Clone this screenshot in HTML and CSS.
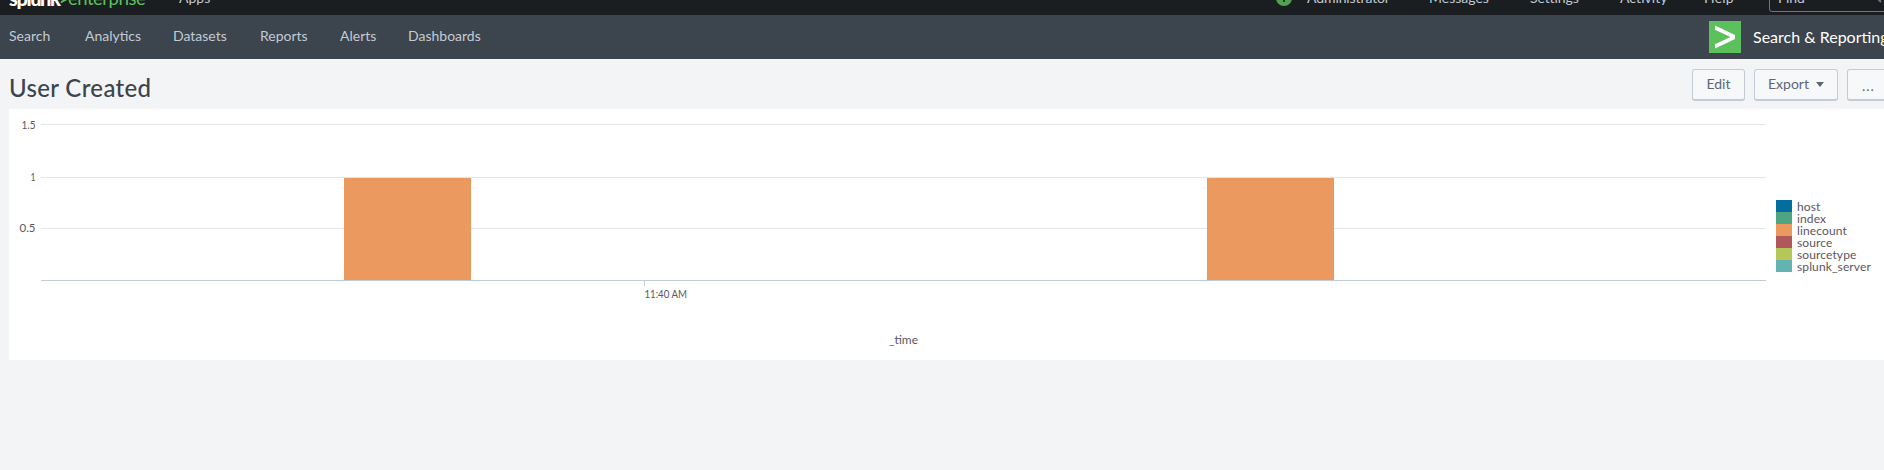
FILE: index.html
```html
<!DOCTYPE html>
<html lang="en">
<head>
<meta charset="utf-8">
<title>User Created</title>
<link rel="stylesheet" href="styles.css">
</head>
<body>
<header class="topbar">
  <div class="brand"><span class="brand-name">splunk</span><span class="brand-caret">&gt;</span><span class="brand-edition">enterprise</span></div>
  <a class="apps">Apps</a>
  <nav class="system">
    <span class="health">i</span>
    <a class="admin">Administrator</a>
    <a class="messages">Messages</a>
    <a class="settings">Settings</a>
    <a class="activity">Activity</a>
    <a class="help">Help</a>
    <div class="find"><span>Find</span>
      <svg class="find-icon" width="12" height="12" viewBox="0 0 12 12"><circle cx="4.500" cy="4.500" r="3.500"/><path d="M7 7l4 4"/></svg>
    </div>
  </nav>
</header>
<nav class="appbar">
  <div class="links">
    <a>Search</a>
    <a>Analytics</a>
    <a>Datasets</a>
    <a>Reports</a>
    <a>Alerts</a>
    <a>Dashboards</a>
  </div>
  <div class="app">
    <svg class="app-icon" width="32" height="32" viewBox="0 0 32 32"><rect width="32" height="32" fill="#5cc05c"/><path d="M6 4.500L26 14v4L6 27.500v-4.300L21.500 16 6 8.800z" fill="#fff"/></svg>
    <span class="app-name">Search &amp; Reporting</span>
  </div>
</nav>
<main>
  <div class="heading">
    <h1>User Created</h1>
    <div class="actions">
      <button class="edit">Edit</button>
      <button class="export">Export<i class="caret"></i></button>
      <button class="more">...</button>
    </div>
  </div>
  <section class="panel">
    <svg class="chart" width="1767" height="251" viewBox="0 0 1767 251">
      <g class="grid"><path d="M32 15.500H1757M32 68.500H1757M32 119.500H1757"/></g>
      <g class="bars"><rect x="335" y="69" width="127" height="102"/><rect x="1198" y="69" width="127" height="102"/></g>
      <path class="axis" d="M32 171.500H1757M635.500 172v5"/>
      <g class="labels">
        <text x="12.500" y="20" textLength="14" lengthAdjust="spacingAndGlyphs">1.5</text>
        <text x="21.500" y="72" textLength="5" lengthAdjust="spacingAndGlyphs">1</text>
        <text x="10.500" y="123" textLength="16" lengthAdjust="spacingAndGlyphs">0.5</text>
        <text x="635.500" y="189" textLength="42.500" lengthAdjust="spacingAndGlyphs">11:40 AM</text>
        <text x="880" y="235" textLength="29" lengthAdjust="spacingAndGlyphs">_time</text>
      </g>
    </svg>
    <ul class="legend">
      <li><i class="host"></i><span>host</span></li>
      <li><i class="index"></i><span>index</span></li>
      <li><i class="linecount"></i><span>linecount</span></li>
      <li><i class="source"></i><span>source</span></li>
      <li><i class="sourcetype"></i><span>sourcetype</span></li>
      <li><i class="server"></i><span>splunk_server</span></li>
    </ul>
  </section>
</main>
</body>
</html>
```

FILE: styles.css
```css
* { box-sizing: border-box; }
body {
  margin: 0;
  height: 470px;
  overflow: hidden;
  background: #f2f4f5;
  font: 14px/20px Lato, "Open Sans", sans-serif;
  color: #3c444d;
}
.topbar {
  height: 15px;
  background: #1a1e21;
  color: #c3cbd4;
  display: flex;
  align-items: flex-end;
  overflow: hidden;
  padding-left: 9px;
  white-space: nowrap;
}
.topbar a { height: 27px; line-height: 20px; flex: none; }
.brand { width: 170px; height: 29px; font-size: 20px; line-height: 24px; flex: none; display: flex; }
.brand span { flex: none; }
.brand-name { width: 51px; color: #fff; font-weight: 900; letter-spacing: -1.4px; }
.brand-edition { color: #5cc05c; font-size: 18.5px; letter-spacing: -.5px; }
.brand-caret { width: 8px; color: #5cc05c; font-weight: 900; font-size: 17px; line-height: 25px; margin-left: -1px; margin-right: 1px; }
.system { margin-left: auto; width: 608px; display: flex; align-items: flex-end; flex: none; }
.health {
  width: 16px; height: 16px; margin-bottom: 9px; border-radius: 50%; flex: none;
  background: #53a051; color: #1a1e21; font-size: 12px; line-height: 16px; text-align: center; font-weight: bold;
}
.admin { width: 122px; margin-left: 15px; }
.messages { width: 101px; }
.settings { width: 90px; }
.activity { width: 84px; }
.help { width: 65px; letter-spacing: .2px; }
.admin, .settings { letter-spacing: -.1px; }
.find {
  width: 130px; height: 27px; margin-bottom: 3px; border: 1px solid #6b7785; border-radius: 3px;
  display: flex; align-items: flex-end; padding-left: 8px; flex: none;
}
.find span { height: 23px; line-height: 20px; width: 26px; }
.find-icon { margin: 0 0 8px 66px; fill: none; stroke: #6b7785; stroke-width: 2; }
.appbar {
  height: 44px;
  background: #3c444d;
  color: #c3cbd4;
  display: flex;
  align-items: center;
  padding-left: 9px;
  white-space: nowrap;
}
.links { display: grid; grid-template-columns: 76px 88px 87px 80px 68px 80px; padding-bottom: 2px; }
.app { margin-left: auto; width: 175px; flex: none; display: flex; align-items: center; gap: 12px; }
.app-icon { flex: none; }
.app-name { color: #fff; font-size: 16px; }
.heading { height: 50px; padding-left: 9px; display: flex; justify-content: space-between; }
h1 { margin: 15px 0 0; font-size: 24px; line-height: 28px; font-weight: 500; letter-spacing: .35px; }
.actions { width: 192px; display: flex; gap: 9px; padding-top: 10px; flex: none; }
button {
  height: 32px; border: 1px solid #c3cbd4; border-bottom-width: 2px; border-radius: 3px;
  background: #f7f8fa; color: #5c6773; font: inherit; padding: 0 0 1px; flex: none;
}
.edit { width: 53px; }
.export { width: 84px; display: flex; align-items: center; justify-content: center; gap: 7px; }
.more { width: 53px; text-align: left; padding: 2px 0 0 14px; letter-spacing: 1px; }
.caret { border: 4px solid transparent; border-top: 5px solid #5c6773; border-bottom: 0; }
.panel { margin-left: 9px; height: 251px; background: #fff; display: flex; }
.chart { flex: none; font-size: 11px; }
.grid { fill: none; stroke: #e1e6eb; }
.bars { fill: #ec9960; }
.axis { fill: none; stroke: #c3cbd4; shape-rendering: crispEdges; }
.labels { fill: #5c5560; }
.legend { list-style: none; margin: 91px 0 0; padding: 0; font-size: 12px; line-height: 12px; letter-spacing: .12px; color: #5c5560; }
.legend li { display: flex; gap: 5px; height: 12px; }
.legend span { line-height: 14px; }
.legend i { width: 16px; height: 12px; }
.host { background: #006d9c; }
.index { background: #4fa484; }
.linecount { background: #ec9960; }
.source { background: #af575a; }
.sourcetype { background: #b6c75a; }
.server { background: #62b3b2; }
```
